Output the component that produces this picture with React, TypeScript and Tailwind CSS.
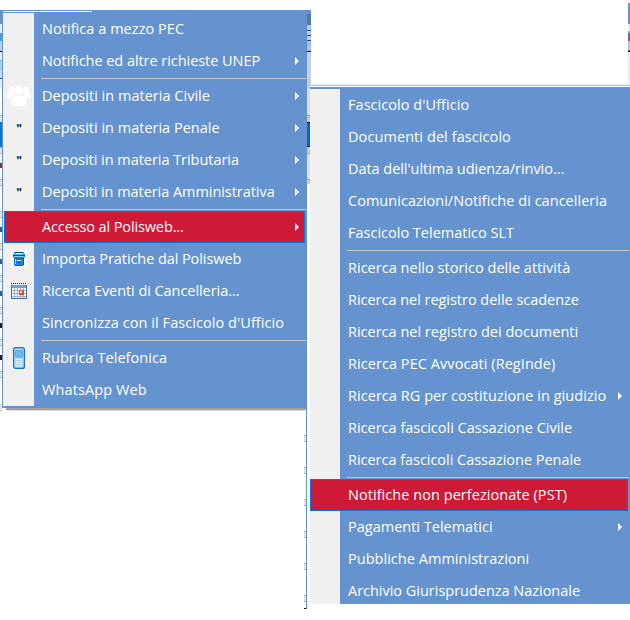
type Item = {
  label: string;
  icon?: "people" | "quote" | "database" | "calendar" | "phone";
  arrow?: boolean;
  active?: boolean;
  tracking?: string;
};

type Strip = [height: number, className: string];

const mainGroups: Item[][] = [
  [
    { label: "Notifica a mezzo PEC", tracking: "tracking-[0.05px]" },
    { label: "Notifiche ed altre richieste UNEP", arrow: true, tracking: "tracking-[-0.05px]" },
  ],
  [
    { label: "Depositi in materia Civile", icon: "people", arrow: true, tracking: "tracking-[0.02px]" },
    { label: "Depositi in materia Penale", icon: "quote", arrow: true },
    { label: "Depositi in materia Tributaria", icon: "quote", arrow: true, tracking: "tracking-[-0.04px]" },
    { label: "Depositi in materia Amministrativa", icon: "quote", arrow: true, tracking: "tracking-[-0.05px]" },
  ],
  [
    { label: "Accesso al Polisweb...", arrow: true, active: true, tracking: "tracking-[-0.12px]" },
    { label: "Importa Pratiche dal Polisweb", icon: "database", tracking: "tracking-[-0.08px]" },
    { label: "Ricerca Eventi di Cancelleria...", icon: "calendar", tracking: "tracking-[-0.06px]" },
    { label: "Sincronizza con il Fascicolo d'Ufficio", tracking: "tracking-[0.06px]" },
  ],
  [
    { label: "Rubrica Telefonica", icon: "phone", tracking: "tracking-[0.05px]" },
    { label: "WhatsApp Web", tracking: "tracking-[0.1px]" },
  ],
];

const subGroups: Item[][] = [
  [
    { label: "Fascicolo d'Ufficio", tracking: "tracking-[0.05px]" },
    { label: "Documenti del fascicolo", tracking: "tracking-[0.08px]" },
    { label: "Data dell'ultima udienza/rinvio...", tracking: "tracking-[-0.05px]" },
    { label: "Comunicazioni/Notifiche di cancelleria", tracking: "tracking-[0.03px]" },
    { label: "Fascicolo Telematico SLT" },
  ],
  [
    { label: "Ricerca nello storico delle attività", tracking: "tracking-[0.02px]" },
    { label: "Ricerca nel registro delle scadenze", tracking: "tracking-[-0.03px]" },
    { label: "Ricerca nel registro dei documenti" },
    { label: "Ricerca PEC Avvocati (RegInde)", tracking: "tracking-[0.06px]" },
    { label: "Ricerca RG per costituzione in giudizio", arrow: true, tracking: "tracking-[0.05px]" },
    { label: "Ricerca fascicoli Cassazione Civile" },
    { label: "Ricerca fascicoli Cassazione Penale", tracking: "tracking-[-0.03px]" },
  ],
  [
    { label: "Notifiche non perfezionate (PST)", active: true, tracking: "tracking-[0.05px]" },
    { label: "Pagamenti Telematici", arrow: true },
    { label: "Pubbliche Amministrazioni", tracking: "tracking-[0.03px]" },
    { label: "Archivio Giurisprudenza Nazionale", tracking: "tracking-[-0.02px]" },
  ],
];

// one grid row of the window behind: header band, then the cell with a bit of its text
function gridRow(mark: string): Strip[] {
  return [
    [1, "bg-[#b4b4b4]"],
    [5, "bg-[#e3e3e3]"],
    [1, "bg-[#b4b4b4]"],
    [9, "bg-white"],
    [5, mark],
    [11, "bg-white"],
  ];
}

// slivers of the window that stay visible around the menus
const leftStrips: Strip[] = [
  [10, "bg-white"],
  [14, "bg-[#6593cf]"],
  [9, "bg-[#e3efff]"],
  [1, "bg-[#6593cf]"],
  [7, "bg-[#3d9df0]"],
  [10, "bg-[#b5d2f8]"],
  [1, "bg-black"],
  [8, "bg-[#e3efff]"],
  [1, "bg-[#55bfff]"],
  [9, "bg-[#a9cdee]"],
  [8, "bg-[#c4dcf2]"],
  [1, "bg-[#2465a0]"],
  [9, "bg-[#e3efff]"],
  [27, "bg-white"],
  [1, "bg-[#b4b4b4]"],
  [6, "bg-[#e3e3e3]"],
  [25, "bg-[#0078d7]"],
  ...gridRow("bg-[#7a3a20]"),
  ...gridRow("bg-white"),
  ...gridRow("bg-[#1d5fa8]"),
  ...gridRow("bg-[#1d5fa8]"),
  ...gridRow("bg-[#1d5fa8]"),
  ...gridRow("bg-[#401020]"),
  ...gridRow("bg-[#401020]"),
  ...gridRow("bg-white"),
  [7, "bg-[#e3e3e3]"],
  [1, "bg-[#b4b4b4]"],
];

const rightStrips: Strip[] = [
  [10, "bg-white"],
  [4, "bg-[#6593cf]"],
  [10, "bg-[#5279ad]"],
  [1, "bg-[#6a7380]"],
  [5, "bg-[#b9cbe3]"],
  [1, "bg-[#1f4e93]"],
  [4, "bg-[#b9cbe3]"],
  [1, "bg-[#1f4e93]"],
  [4, "bg-[#b5cdee]"],
  [1, "bg-[#1f4e93]"],
  [10, "bg-[#a5c0e5]"],
  [1, "bg-black"],
  [36, "bg-[#c3cfde]"],
  [27, "bg-[#dcdcdc]"],
  [1, "bg-[#a0a0a0]"],
  [6, "bg-[#c8c8c8]"],
  [1, "bg-black"],
  [23, "bg-[#0068bd]"],
  [1, "bg-black"],
  [6, "bg-[#c8c8c8]"],
  [1, "bg-[#a0a0a0]"],
  [25, "bg-[#dedede]"],
  [1, "bg-[#a0a0a0]"],
  [4, "bg-[#d0d0d0]"],
];

const edgeStrips: Strip[] = [
  [3, "bg-white"],
  [21, "bg-[#6593cf]"],
  [7, "bg-[#e3efff]"],
  [2, "bg-[#9fb0cc]"],
  [8, "bg-[#81617f]"],
  [9, "bg-[#a5c5f5]"],
  [1, "bg-[#5b5f80]"],
  [1, "bg-black"],
  [32, "bg-[#e3efff]"],
];

// row header ends of the grid, left of the submenu
const tickStrips: Strip[] = [
  [25, "bg-white"],
  ...[0, 1, 2, 3, 4].flatMap((): Strip[] => [
    [1, "bg-[#b4b4b4]"],
    [5, "bg-[#dedede]"],
    [1, "bg-[#b4b4b4]"],
    [25, "bg-white"],
  ]),
  [1, "bg-[#b4b4b4]"],
  [5, "bg-[#dedede]"],
  [1, "bg-[#b4b4b4]"],
  [6, "bg-white"],
  [1, "bg-black"],
];

function Strips({ items }: { items: Strip[] }) {
  return (
    <>
      {items.map(([height, className], i) => (
        <div key={i} className={className} style={{ height }} />
      ))}
    </>
  );
}

function PeopleIcon() {
  return (
    <svg width="24" height="22" viewBox="0 0 24 22" fill="#fff">
      <circle cx="4.500" cy="4.500" r="2.900" />
      <circle cx="19.500" cy="4.500" r="2.900" />
      <path d="M0 11c0-2.600 2-4 4.500-4 2 0 3.500 1 3.500 2.500l-3 4H1.500c-.9 0-1.500-.8-1.500-2zM24 11c0-2.600-2-4-4.500-4-2 0-3.500 1-3.500 2.500l3 4h3.500c.9 0 1.500-.8 1.500-2z" />
      <path
        d="M3.800 17.500c0-4 1.500-6.700 4.500-7.500q3.700 2 7.400 0c3 .8 4.500 3.500 4.500 7.500 0 2.600-1.700 4-4 4H7.800c-2.300 0-4-1.400-4-4z"
        stroke="#f0f0f0"
        strokeWidth=".8"
      />
      <circle cx="12" cy="5.300" r="4.700" stroke="#f0f0f0" strokeWidth=".8" />
    </svg>
  );
}

function DatabaseIcon() {
  return (
    <svg width="16" height="16" viewBox="0 0 16 16">
      <path fill="#fff" d="M0 0h16v16H0z" />
      <path fill="#1687e0" d="M2 3h12v3l-1 1v7l-1 1H4l-1-1V7L2 6z" />
      <path fill="#4bb9f5" d="M3 1h10l1 3H2z" />
      <path fill="#174a78" d="M4 1h8v1H4zM2 4h12v1H2z" />
      <path fill="#1b5f9e" d="M3 7h10v1H3zM4 14h8v1H4z" />
      <path fill="#7ad4ff" d="M3 5h10v1H3zM4 8h1v5H4z" />
      <path fill="#d8f3ff" d="M5 2h6v1H5zM6 9h4v1H6z" />
      <path fill="#0b58a7" d="M12 8h1v6h-1zM6 11h4v1H6z" />
    </svg>
  );
}

function CalendarIcon() {
  return (
    <svg width="16" height="16" viewBox="0 0 16 16" shapeRendering="crispEdges">
      <path fill="#4a6ea8" d="M0 2h16v14H0z" />
      <path fill="#7f9dcc" d="M1 2h14v3H1z" />
      <path fill="#fafcff" d="M1 5h14v10H1z" />
      <path stroke="#333" strokeDasharray="1 1" d="M0 .5h16" />
      <path stroke="#dfe6f1" strokeDasharray="1 1" d="M0 1.500h16" />
      <path stroke="#9db4d8" d="M3.500 5v10M6.500 5v10M9.500 5v10M12.500 5v10M1 7.500h14M1 10.500h14M1 13.500h14" />
      <path fill="#e8501f" d="M8 7h5v5H8z" />
      <path fill="#fff" d="M9 8h2v2H9z" />
    </svg>
  );
}

function PhoneIcon() {
  return (
    <svg width="12" height="22" viewBox="0 0 12 22">
      <rect x=".6" y=".6" width="10.800" height="20.800" rx="2" fill="#a9d5f9" stroke="#1971c5" strokeWidth="1.200" />
      <rect x="2.500" y="3.500" width="7" height="6.500" rx=".8" fill="#75b7ef" stroke="#5aa5e6" />
      <path fill="#e5f3ff" d="M2.500 12h7v7h-7z" />
      <path stroke="#a3c4df" strokeDasharray="2 .5" d="M2.500 13.500h7M2.500 15.500h7M2.500 17.500h7" />
    </svg>
  );
}

function ItemIcon({ icon }: { icon: Item["icon"] }) {
  if (icon === "people") return <PeopleIcon />;
  if (icon === "database") return <DatabaseIcon />;
  if (icon === "calendar") return <CalendarIcon />;
  if (icon === "phone") return <PhoneIcon />;
  if (icon === "quote") return <span className="pt-0.5 font-['Liberation_Sans',sans-serif] text-[12px] font-bold text-[#222]">"</span>;
  return null;
}

function Arrow() {
  return (
    <svg width="4" height="8" viewBox="0 0 4 8" fill="#fff">
      <path d="M0 0l4 4-4 4z" />
    </svg>
  );
}

function MenuItem({ item, sub }: { item: Item; sub?: boolean }) {
  return (
    <div
      className={`mr-0.5 flex h-8 items-center ${sub ? "" : "ml-px"} ${
        item.active ? "bg-[#ce1a36] outline outline-1 -outline-offset-1 outline-[#0078d7]" : ""
      }`}
    >
      <div className={`flex shrink-0 items-center justify-center ${sub ? "w-[38px]" : "w-[30px]"}`}>
        <ItemIcon icon={item.icon} />
      </div>
      <span className={`flex-1 whitespace-nowrap ${sub ? "" : "pl-2"} ${item.tracking ?? ""}`}>{item.label}</span>
      {item.arrow && (
        <div className="mr-1.5">
          <Arrow />
        </div>
      )}
    </div>
  );
}

function MenuGroups({ groups, sub }: { groups: Item[][]; sub?: boolean }) {
  return (
    <>
      {groups.map((group, i) => (
        <div key={i}>
          {i > 0 && (
            <div className={`flex h-[3px] items-center pr-px ${sub ? "pl-[37px]" : "pl-[38px]"}`}>
              <div className="h-px w-full bg-[#c9c9c9]" />
            </div>
          )}
          {group.map((item) => (
            <MenuItem key={item.label} item={item} sub={sub} />
          ))}
        </div>
      ))}
    </>
  );
}

export default function App() {
  return (
    <div className="flex h-[620px] w-[630px] overflow-hidden bg-white font-['Open_Sans','Noto_Sans',sans-serif] text-[14.500px] leading-5 text-white">
      <div className="w-0.5 shrink-0">
        <Strips items={leftStrips} />
      </div>
      <div className="w-[305px] shrink-0 pt-2.5">
        <div className="h-[398px] bg-[#6593cf] pl-px">
          <div className="flex h-[3px] items-center">
            <div className="h-px w-[89px] bg-white" />
          </div>
          <div className="h-[393px] bg-[linear-gradient(to_right,#f0f0f0_31px,#6593cf_31px)]">
            <MenuGroups groups={mainGroups} />
          </div>
        </div>
        <div className="h-[201px] border-r border-[#6593cf]">
          <div className="h-0.5 pl-1">
            <div className="h-full bg-[#a09d9a]" />
          </div>
          <div className="h-px pl-1">
            <div className="h-full bg-[#dedede]" />
          </div>
          <div className="ml-auto w-0.5 overflow-hidden">
            <div className="-mt-px">
              <Strips items={tickStrips} />
            </div>
          </div>
        </div>
      </div>
      <div className="relative w-[323px] shrink-0">
        <div className="absolute top-0 left-0 w-1">
          <Strips items={rightStrips} />
        </div>
        <div className="flex h-[84px] justify-end">
          <div className="w-0.5">
            <Strips items={edgeStrips} />
          </div>
        </div>
        <div className="relative h-[520px] pl-[3px]">
          <div className="h-px bg-[#e3efff]" />
          <div className="h-px bg-[#b8c4d2]" />
          <div className="h-px bg-white" />
          <div className="h-0.5 bg-[#6593cf]" />
          <div className="h-[515px] overflow-hidden bg-[linear-gradient(to_right,#f0f0f0_30px,#6593cf_30px)]">
            <MenuGroups groups={subGroups} sub />
          </div>
        </div>
      </div>
    </div>
  );
}
